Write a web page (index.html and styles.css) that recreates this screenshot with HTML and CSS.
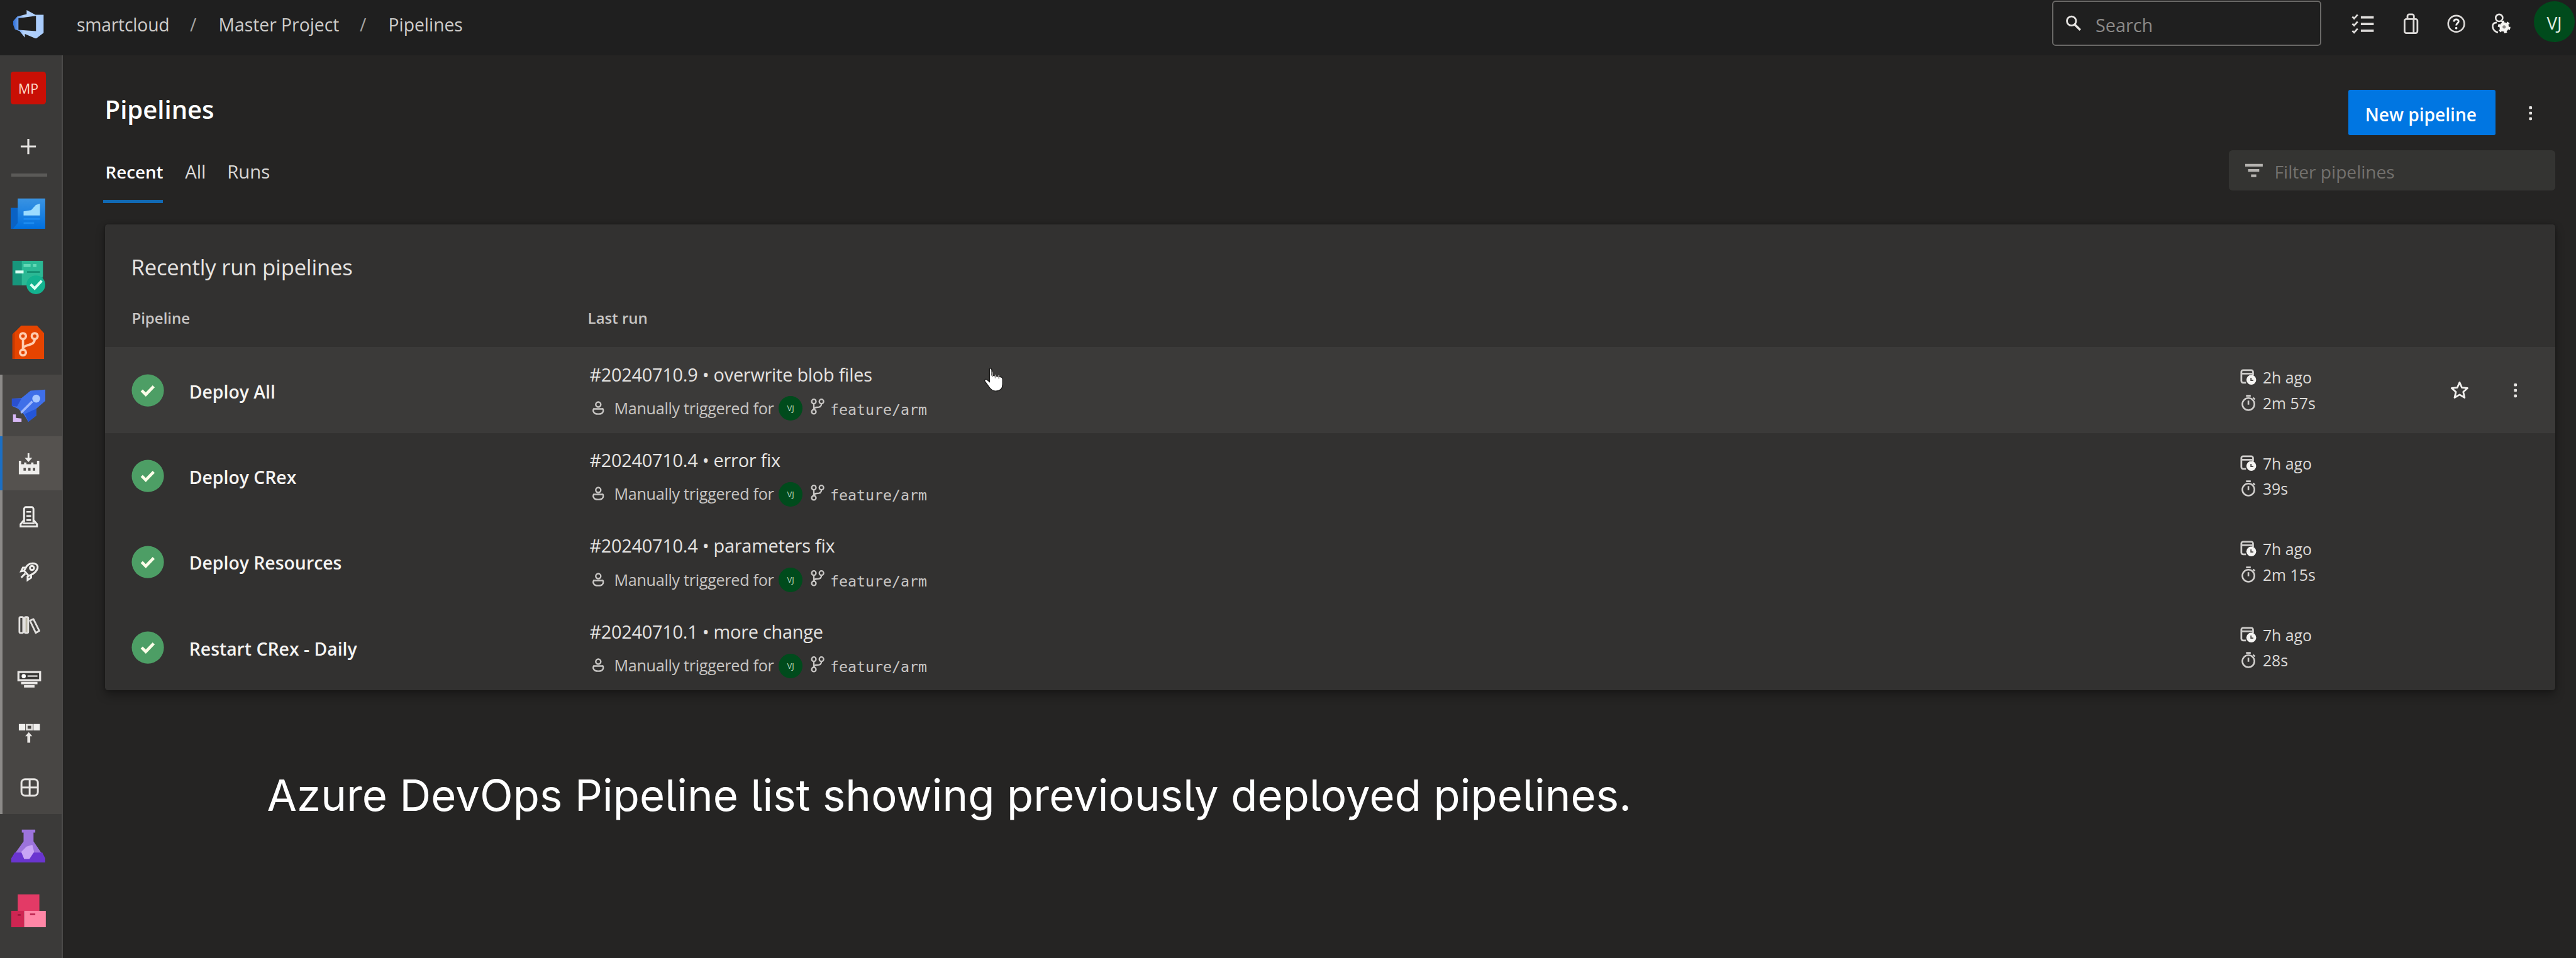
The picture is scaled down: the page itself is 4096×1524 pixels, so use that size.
FILE: index.html
```html
<!DOCTYPE html>
<html lang="en">
<head>
<meta charset="utf-8">
<title>Pipelines - Master Project</title>
<link rel="stylesheet" href="styles.css">
</head>
<body>
<svg class="sprite" aria-hidden="true">
  <symbol id="check" viewBox="0 0 56 56"><circle cx="28" cy="28" r="27.5" fill="#4d9e65"/><path d="M17.500 28l7 7 13.500-14" fill="none" stroke="#fbfde8" stroke-width="5"/></symbol>
  <symbol id="person" viewBox="0 0 20 24"><g fill="none" stroke="currentColor" stroke-width="2.600"><circle cx="10" cy="6" r="4.300"/><path d="M3 12.500c-2 2-2 4-1 6 1 2.500 4 3.700 8 3.700s7-1.200 8-3.700c1-2 1-4-1-6M3 13.500h14"/></g></symbol>
  <symbol id="branch" viewBox="0 0 24 28"><g fill="none" stroke="currentColor" stroke-width="2.500"><circle cx="6" cy="5" r="3.700"/><circle cx="19" cy="5" r="3.700"/><circle cx="6" cy="22.500" r="3.700"/><path d="M6 9v10M19 9c0 5-4 6-8 6-3 0-5 1.500-5 4"/></g></symbol>
  <symbol id="calendar" viewBox="0 0 28 28"><path d="M10 23.500H5a3 3 0 0 1-3-3V5a3 3 0 0 1 3-3h14a3 3 0 0 1 3 3v6M2 8h20" fill="none" stroke="currentColor" stroke-width="3"/><circle cx="19" cy="18.500" r="8.300" fill="#f5f4f2"/><path d="M18.500 15v4.500h4" fill="none" stroke="#454341" stroke-width="2"/></symbol>
  <symbol id="timer" viewBox="0 0 26 28"><g fill="none" stroke="currentColor" stroke-width="2.800"><circle cx="13" cy="16" r="10.300"/><path d="M13 10v7M9 1.800h8M21 5l3 3"/></g></symbol>
  <symbol id="dots" viewBox="0 0 8 28"><g fill="#e6e4e2"><rect x="1.500" y="2" width="5" height="5" rx="1.500"/><rect x="1.500" y="11.500" width="5" height="5" rx="1.500"/><rect x="1.500" y="21" width="5" height="5" rx="1.500"/></g></symbol>
</svg>

<header class="topbar">
  <svg class="logo" viewBox="0 0 54 50">
    <defs><linearGradient id="lg" x1="0" x2="1"><stop offset="0" stop-color="#2d6fd8"/><stop offset=".35" stop-color="#b4d2fb"/><stop offset="1" stop-color="#a8cbfb"/></linearGradient></defs>
    <path fill="url(#lg)" fill-rule="evenodd" d="M1 20L8 12l16-4V1l15 8h14v31l-13 10-19-8v6L12 37l-8-3-3-8zM10 15v20l30 2V11z"/>
  </svg>
  <nav class="crumbs"><span>smartcloud</span><i>/</i><span>Master Project</span><i>/</i><span>Pipelines</span></nav>
  <div class="search">
    <svg viewBox="0 0 28 28"><circle cx="10.500" cy="10" r="7.800" fill="none" stroke="#e8e6e4" stroke-width="3"/><path d="M16 16l9.500 9.500" stroke="#e8e6e4" stroke-width="3.800"/></svg>
    <span>Search</span>
  </div>
  <div class="tools">
    <svg viewBox="0 0 40 36"><g fill="none" stroke="#dddbd9"><path d="M16 7h22M16 18.500h22M16 30h22" stroke-width="4"/><path d="M1.500 6l3 3 6-6.500M1.500 18l3 3 6-6.500M1.500 30l3 3 6-6.500" stroke-width="3"/></g></svg>
    <svg class="bag" viewBox="0 0 40 36"><g fill="none" stroke="#dddbd9" stroke-width="3"><rect x="9" y="10" width="22" height="24" rx="3"/><path d="M14 10V5a3 3 0 0 1 3-3h5a3 3 0 0 1 3 3v5M24.500 11v23"/></g></svg>
    <svg class="help" viewBox="0 0 40 36"><circle cx="20" cy="18" r="13.800" fill="none" stroke="#dddbd9" stroke-width="2.800"/><path d="M16 14.500c0-5 8-5 8-.5 0 3.200-4 3-4 7" fill="none" stroke="#eee" stroke-width="3"/><circle cx="20" cy="25.500" r="2" fill="#eee"/></svg>
    <svg class="gear" viewBox="0 0 40 36"><g fill="none" stroke="#e8e6e4" stroke-width="2.800"><circle cx="17" cy="8" r="6"/><path d="M13 16c-6 0-8 4-7 8 1 5 5 8 9 9"/></g><circle cx="25.500" cy="23.500" r="8" fill="#f5f4f2"/><circle cx="25.500" cy="23.500" r="8.800" fill="none" stroke="#f5f4f2" stroke-width="4" stroke-dasharray="4.600 4.600"/><circle cx="25.500" cy="23.500" r="2.800" fill="#8a8886"/></svg>
  </div>
  <div class="avatar">VJ</div>
</header>

<div class="shell">
  <aside class="rail">
    <div class="slot project"><span>MP</span></div>
    <div class="slot plus"><svg viewBox="0 0 28 28"><path d="M14 1v26M1 14h26" stroke="#e4e2e0" stroke-width="3.400"/></svg></div>
    <div class="divider"></div>
    <div class="slot"><svg viewBox="0 0 60 56"><defs><linearGradient id="bl" y2="1" x2="0"><stop offset="0" stop-color="#3a93e2"/><stop offset="1" stop-color="#0070e0"/></linearGradient></defs><path fill="#0a62c4" d="M0 18h14v36H0z"/><path fill="url(#bl)" d="M12 2h47v52H4l8-10z"/><path fill="#9bdcff" d="M22 31V24l13-2 8-9 7-2v20z"/><path d="M22 37h28M22 44h18" stroke="#1c8bf0" stroke-width="3"/></svg></div>
    <div class="slot"><svg viewBox="0 0 60 60"><rect x="3" y="1" width="52" height="42" fill="#17967c"/><path fill="#2bb894" d="M19 1h36v27L34 43H19z"/><path d="M8 20h14" stroke="#d9fff3" stroke-width="5"/><path d="M22 9h12M38 9h6" stroke="#63d8b5" stroke-width="5"/><path d="M28 20h22" stroke="#149072" stroke-width="3"/><circle cx="43" cy="42" r="16" fill="#13b28f"/><path d="M34 41l7 7 12-13" fill="none" stroke="#dcfff4" stroke-width="4.500"/></svg></div>
    <div class="slot"><svg viewBox="0 0 60 60"><path fill="#e54400" d="M3 58V16L18 1h27l12 13v44z"/><path fill="#c83a00" d="M3 16L7 11v47H3z"/><g fill="none" stroke="#ffcdb0" stroke-width="4"><circle cx="21" cy="19" r="5"/><circle cx="41" cy="19" r="5"/><circle cx="21" cy="47" r="5"/><path d="M21 24v18M41 24c0 9-8 9-13 11-5 1.500-7 3-7 7"/></g></svg></div>
    <div class="group">
      <div class="slot"><svg viewBox="0 0 62 60"><path fill="#3f6fe8" d="M60 2v20L44 36v12L30 59l-8-13-10-10L1 31V18l17-1L34 4z"/><path fill="#2456d8" d="M30 59l-6-14 20-9v12z"/><path d="M17 43l20-20" stroke="#9db8ff" stroke-width="4"/><path fill="#2a50cf" d="M1 18h17l-8 14-9-1z"/><circle cx="44" cy="18" r="7" fill="#a9c8ff"/><path fill="#d8b8f6" d="M3 46h5v6l10 1v6H3z"/></svg></div>
      <div class="sub active"><svg viewBox="0 0 38 38"><path d="M17.500 1v11" stroke="#eeedeb" stroke-width="3"/><path fill="#eeedeb" d="M11 9h13l-6.500 7zM1 14h4v6h5v-3h4v3h8v-3h4v3h6v-6h4v23H1z"/><path fill="#55524f" d="M9 26h4v5H9zM17 26h4v5h-4zM25 26h4v5h-4z"/></svg></div>
      <div class="sub"><svg viewBox="0 0 38 38"><g fill="none" stroke="#eeedeb" stroke-width="3.200"><path d="M10 28V5a3 3 0 0 1 3-3h10a3 3 0 0 1 3 3v23M10 24l-6 7v4h28v-4l-6-7"/><path d="M14 10h8M14 17h8M14 24h8M8 29.500h20" stroke-width="2.800"/></g></svg></div>
      <div class="sub"><svg viewBox="0 0 38 38"><g fill="none" stroke="#eeedeb" stroke-width="3.200"><path d="M13 13c3-6 9-8 15-7 4 1 6 4 5 8-2 6-6 9-11 11l-4 2-8-9z"/><path d="M13 13H8l-3 6 6-1M22 25v5l-6 4v-7M12 23l-7 7"/><circle cx="23.500" cy="13.500" r="3.500"/></g></svg></div>
      <div class="sub"><svg viewBox="0 0 38 38"><g fill="none" stroke="#e2e0de" stroke-width="3"><rect x="2" y="5" width="6.500" height="27" rx="2"/><rect x="11" y="5" width="6" height="27" rx="2" fill="#bdb9a8"/><path d="M20 11l6-2.500 10 20-6 3.500z" stroke-linejoin="round"/></g></svg></div>
      <div class="sub"><svg class="wide" viewBox="0 0 42 38"><rect x="2.500" y="6.500" width="37" height="14" fill="#3a3937" stroke="#e8e6e4" stroke-width="3.500"/><circle cx="11.500" cy="13.500" r="3.600" fill="#fff"/><path d="M18 13.500h17" stroke="#bab8b6" stroke-width="3"/><path d="M7 25.500h28M12 31h18" stroke="#e8e6e4" stroke-width="4"/></svg></div>
      <div class="sub"><svg viewBox="0 0 38 38"><path fill="#f0efed" d="M1 3h11v11H1zM26 3h11v11H26z"/><rect x="14.500" y="4.500" width="9" height="8" fill="none" stroke="#e2e0de" stroke-width="3"/><path fill="#e8e6e4" d="M18 17l6 7h-3.500v11h-5V24H12z"/></svg></div>
      <div class="sub"><svg viewBox="0 0 38 38"><g fill="none" stroke="#e8e6e4" stroke-width="3.200"><rect x="5.500" y="5" width="28" height="28" rx="6"/><path d="M19.500 5v28M5.500 19h28"/></g></svg></div>
    </div>
    <div class="slot"><svg viewBox="0 0 60 60"><path fill="#9c73dc" d="M19 2h23v5h-3v15l19 28v8H2v-8l20-28V7h-3z"/><path fill="#6a35d0" d="M7 41h47l5 10v7H1v-7z"/><path fill="#c9a4f6" d="M18 40l9-9 10-3 3 12-8 12h-9z"/></svg></div>
    <div class="slot"><svg viewBox="0 0 60 60"><path fill="#e33a66" d="M12 2h37v28H12z"/><path fill="#cf2552" d="M1 30h22v28H1z"/><path fill="#ff86a6" d="M23 30h37v28H23z"/><path d="M33 36h9" stroke="#c02a54" stroke-width="3"/><path d="M12 37h5" stroke="#a0163c" stroke-width="3"/></svg></div>
  </aside>

  <main class="page">
    <div class="head">
      <h1>Pipelines</h1>
      <button class="primary">New pipeline</button>
      <svg class="more"><use href="#dots"/></svg>
    </div>
    <div class="tabbar">
      <nav class="tabs"><span class="tab current">Recent</span><span class="tab all">All</span><span class="tab runs">Runs</span></nav>
      <div class="filter"><svg viewBox="0 0 30 24"><path d="M0 3h30M5 12h19M10 21h9" stroke="#b5b3b0" stroke-width="4.500"/></svg><span>Filter pipelines</span></div>
    </div>

    <section class="card">
      <h2>Recently run pipelines</h2>
      <div class="columns"><span>Pipeline</span><span>Last run</span></div>

      <div class="row hover">
        <svg class="status"><use href="#check"/></svg>
        <div class="name">Deploy All</div>
        <div class="run"><div class="what">#20240710.9 • overwrite blob files</div><div class="why"><svg class="person"><use href="#person"/></svg><span class="trigger">Manually triggered for</span><b>VJ</b><svg class="branch"><use href="#branch"/></svg><code>feature/arm</code></div></div>
        <div class="times"><div><svg class="cal"><use href="#calendar"/></svg><span>2h ago</span></div><div><svg class="tim"><use href="#timer"/></svg><span>2m 57s</span></div></div>
        <div class="actions"><svg class="star" viewBox="0 0 32 32"><path d="M16 2.500l4 9 9.500.8-7.200 6.500 2.200 9.700L16 23.500l-8.500 5 2.200-9.700L2.500 12.300l9.500-.8z" fill="none" stroke="#f0efed" stroke-width="3" stroke-linejoin="round"/></svg><svg class="more"><use href="#dots"/></svg></div>
        <svg class="cursor" viewBox="0 0 34 42"><path d="M11 2c2.500 0 3 1.500 3 3v9l16 3c2 .5 2.500 2 2.500 4v8c0 7-4 12-12 12-6 0-9-3-12-8L2 24c-1-2 1-4 3-3l5 4V4c0-1 .3-2 1-2z" fill="#fff" stroke="#1c1b1a" stroke-width="1.500"/><path d="M14.500 8l1 9M20 13v6M26 14v6" stroke="#a5a3a1" stroke-width="2"/></svg>
      </div>

      <div class="row">
        <svg class="status"><use href="#check"/></svg>
        <div class="name">Deploy CRex</div>
        <div class="run"><div class="what">#20240710.4 • error fix</div><div class="why"><svg class="person"><use href="#person"/></svg><span class="trigger">Manually triggered for</span><b>VJ</b><svg class="branch"><use href="#branch"/></svg><code>feature/arm</code></div></div>
        <div class="times"><div><svg class="cal"><use href="#calendar"/></svg><span>7h ago</span></div><div><svg class="tim"><use href="#timer"/></svg><span>39s</span></div></div>
      </div>

      <div class="row">
        <svg class="status"><use href="#check"/></svg>
        <div class="name">Deploy Resources</div>
        <div class="run"><div class="what">#20240710.4 • parameters fix</div><div class="why"><svg class="person"><use href="#person"/></svg><span class="trigger">Manually triggered for</span><b>VJ</b><svg class="branch"><use href="#branch"/></svg><code>feature/arm</code></div></div>
        <div class="times"><div><svg class="cal"><use href="#calendar"/></svg><span>7h ago</span></div><div><svg class="tim"><use href="#timer"/></svg><span>2m 15s</span></div></div>
      </div>

      <div class="row">
        <svg class="status"><use href="#check"/></svg>
        <div class="name">Restart CRex - Daily</div>
        <div class="run"><div class="what">#20240710.1 • more change</div><div class="why"><svg class="person"><use href="#person"/></svg><span class="trigger">Manually triggered for</span><b>VJ</b><svg class="branch"><use href="#branch"/></svg><code>feature/arm</code></div></div>
        <div class="times"><div><svg class="cal"><use href="#calendar"/></svg><span>7h ago</span></div><div><svg class="tim"><use href="#timer"/></svg><span>28s</span></div></div>
      </div>
    </section>

    <p class="caption">Azure DevOps Pipeline list showing previously deployed pipelines.</p>
  </main>
</div>
</body>
</html>
```

FILE: styles.css
```css
* { box-sizing: border-box; }
html { font-size: 9.30909px; }
body {
  margin: 0;
  width: 100vw;
  height: 100vh;
  overflow: hidden;
  background: #252423;
  color: #e6e4e2;
  font-family: "Open Sans", "Noto Sans", sans-serif;
  font-size: 3.1rem;
  white-space: nowrap;
}
svg { display: block; flex: none; }
.sprite { position: absolute; width: 0; height: 0; }
h1, h2, p { margin: 0; }

/* top bar */
.topbar {
  display: flex;
  align-items: center;
  height: 9.5rem;
  padding: 0 .2rem 1.5rem 2.2rem;
  background: #1f1f1f;
}
.logo { width: 5.4rem; height: 5rem; margin-top: .2rem; }
.crumbs {
  display: flex;
  gap: 3.5rem;
  margin: .4rem auto 0 5.5rem;
  color: #cfcdcb;
  font-size: 3.04rem;
}
.crumbs i { width: 1.4rem; font-style: normal; color: #a5a3a1; }
.crumbs span:first-child { letter-spacing: -.02rem; }
.search {
  display: flex;
  align-items: center;
  gap: 2.3rem;
  width: 46rem;
  height: 7.7rem;
  padding-left: 2.1rem;
  border: .3rem solid #6a6967;
  border-radius: .6rem;
  color: #8b8987;
}
.search svg { width: 2.8rem; height: 2.8rem; }
.search span { margin-top: .4rem; }
.tools { display: flex; margin: .1rem 3.6rem 0 5.1rem; }
.tools svg { width: 4rem; height: 3.6rem; }
.tools .bag { margin-left: 4.2rem; }
.tools .help, .tools .gear { margin-left: 3.7rem; }
.avatar {
  width: 7rem;
  height: 7rem;
  margin-top: -.6rem;
  border-radius: 50%;
  background: #004b1c;
  color: #e2f0e4;
  font-size: 3rem;
  line-height: 7.5rem;
  text-align: center;
}

/* left rail */
.shell { display: flex; height: calc(100vh - 9.5rem); }
.rail {
  width: 10.7rem;
  flex: none;
  background: #3b3a39;
  border-right: .3rem solid #4b4a49;
}
.slot {
  display: flex;
  align-items: center;
  justify-content: center;
  height: 11rem;
  padding-right: .8rem;
}
.slot svg { width: 6rem; height: 6rem; }
.project span {
  width: 6rem;
  height: 5.6rem;
  border-radius: .5rem;
  background: #c90f05;
  color: #fbd9cf;
  font-size: 2.3rem;
  font-weight: 500;
  line-height: 5.7rem;
  text-align: center;
}
.plus { height: 9rem; }
.plus .svg, .plus svg { width: 2.8rem; height: 2.8rem; }
.divider { width: 6.2rem; height: .6rem; margin: .1rem 0 .8rem 1.9rem; background: #5b5a58; }
.group {
  background: linear-gradient(90deg, #8c8a88 .4rem, #484644 .4rem);
  margin-right: -.1rem;
}
.group .slot { height: 10.6rem; }
.sub {
  display: flex;
  align-items: center;
  height: 9.22rem;
  padding-left: 3.1rem;
}
.sub svg { width: 3.8rem; height: 3.8rem; }
.sub .wide { width: 4.2rem; margin-left: -.2rem; }
.active { background: linear-gradient(90deg, #1b6fc4 .4rem, #55524f .4rem); }

/* page */
.page { flex: 1; padding: 5.9rem 3.5rem 0 7.2rem; }
.head { display: flex; align-items: center; height: 7.7rem; }
h1 {
  margin: -1.3rem auto 0 0;
  color: #fff;
  font-size: 4.3rem;
  font-weight: 600;
}
.primary {
  width: 25.1rem;
  height: 7.7rem;
  padding: .6rem .3rem 0 0;
  border: 0;
  border-radius: .3rem;
  background: #0076e2;
  color: #fff;
  font: 600 3.02rem "Open Sans", "Noto Sans", sans-serif;
}
.more { width: .8rem; height: 2.8rem; }
.head .more { margin: .2rem 3.9rem 0 5.6rem; }
.tabbar { display: flex; justify-content: space-between; margin-top: 2.6rem; }
.tabs { display: flex; margin-left: -.3rem; }
.tab { height: 9rem; line-height: 7.4rem; color: #dcdad8; font-size: 3.15rem; }
.current {
  width: 10.2rem;
  padding-left: .4rem;
  border-bottom: .6rem solid #1169b3;
  color: #fff;
  font-size: 2.98rem;
  font-weight: 600;
}
.all { margin-left: 3.8rem; width: 3.6rem; }
.runs { margin-left: 3.6rem; }
.filter {
  display: flex;
  align-items: center;
  gap: 2rem;
  width: 55.8rem;
  height: 6.8rem;
  padding-left: 2.8rem;
  border-radius: .6rem;
  background: #343432;
  color: #73716e;
  font-size: 3.02rem;
}
.filter svg { width: 3rem; height: 2.4rem; }
.filter span { margin-top: .5rem; }

/* recent runs */
.card {
  margin-top: 3.7rem;
  padding-top: 4.4rem;
  border-radius: .5rem;
  background: #323130;
  box-shadow: 0 .8rem 1.6rem rgba(0, 0, 0, .32), 0 0 .5rem rgba(0, 0, 0, .3);
}
h2 {
  padding-left: 4.5rem;
  line-height: 5.7rem;
  color: #e6e4e2;
  font-size: 3.72rem;
  font-weight: 400;
  letter-spacing: -.02rem;
}
.columns {
  display: grid;
  grid-template-columns: 77.9rem 1fr;
  height: 10.85rem;
  padding: 3.27rem 0 0 4.6rem;
  line-height: 5.2rem;
  color: #c8c6c4;
  font-size: 2.58rem;
  font-weight: 600;
}
.row {
  position: relative;
  display: grid;
  grid-template-columns: 9.9rem 68.1rem 282.2rem 35.9rem 1fr;
  align-items: center;
  height: 14.66rem;
  padding-left: 4.5rem;
}
.row:last-child { border-radius: 0 0 .5rem .5rem; }
.hover { background: #3b3a39; }
.status { width: 5.6rem; height: 5.6rem; }
.name { margin-top: .4rem; color: #f5f4f2; font-size: 3.05rem; font-weight: 600; }
.run { margin-top: .3rem; }
.what { padding-left: .3rem; line-height: 5.75rem; letter-spacing: -.025rem; }
.why {
  display: flex;
  align-items: center;
  height: 5.75rem;
  padding-left: .8rem;
  color: #c8c6c4;
  font-size: 2.7rem;
}
.person { width: 2rem; height: 2.4rem; }
.trigger { width: 27.4rem; margin-left: 1.7rem; letter-spacing: -.03rem; }
.why b {
  width: 4.1rem;
  height: 4.2rem;
  margin: .2rem 1.3rem 0 .7rem;
  border-radius: 50%;
  background: #004b1c;
  color: #b9d6bd;
  font-size: 1.4rem;
  font-weight: 400;
  line-height: 4.1rem;
  text-align: center;
}
.branch { width: 2.5rem; height: 2.8rem; margin-top: -.3rem; }
code { margin: .5rem 0 0 .9rem; font: 2.5rem "DejaVu Sans Mono", monospace; }
.times { color: #dcdad8; font-size: 2.67rem; }
.times div { display: flex; align-items: center; height: 4.35rem; }
.times svg { width: 2.8rem; height: 2.8rem; margin-right: 1.1rem; color: #cfcdcb; }
.times .tim { width: 2.6rem; margin: 0 1.2rem 0 .1rem; }
.actions { display: flex; align-items: center; }
.star { width: 3.2rem; height: 3.2rem; margin-right: 7.6rem; }
.cursor {
  position: absolute;
  left: 150.1rem;
  top: 3.4rem;
  width: 3.4rem;
  height: 4.2rem;
}

.caption {
  margin: 13.5rem 0 0 27.7rem;
  color: #fff;
  font-family: Inter, "Open Sans", sans-serif;
  font-size: 7.4rem;
  line-height: 9rem;
  letter-spacing: .009rem;
  font-feature-settings: "cv05";
}
```
